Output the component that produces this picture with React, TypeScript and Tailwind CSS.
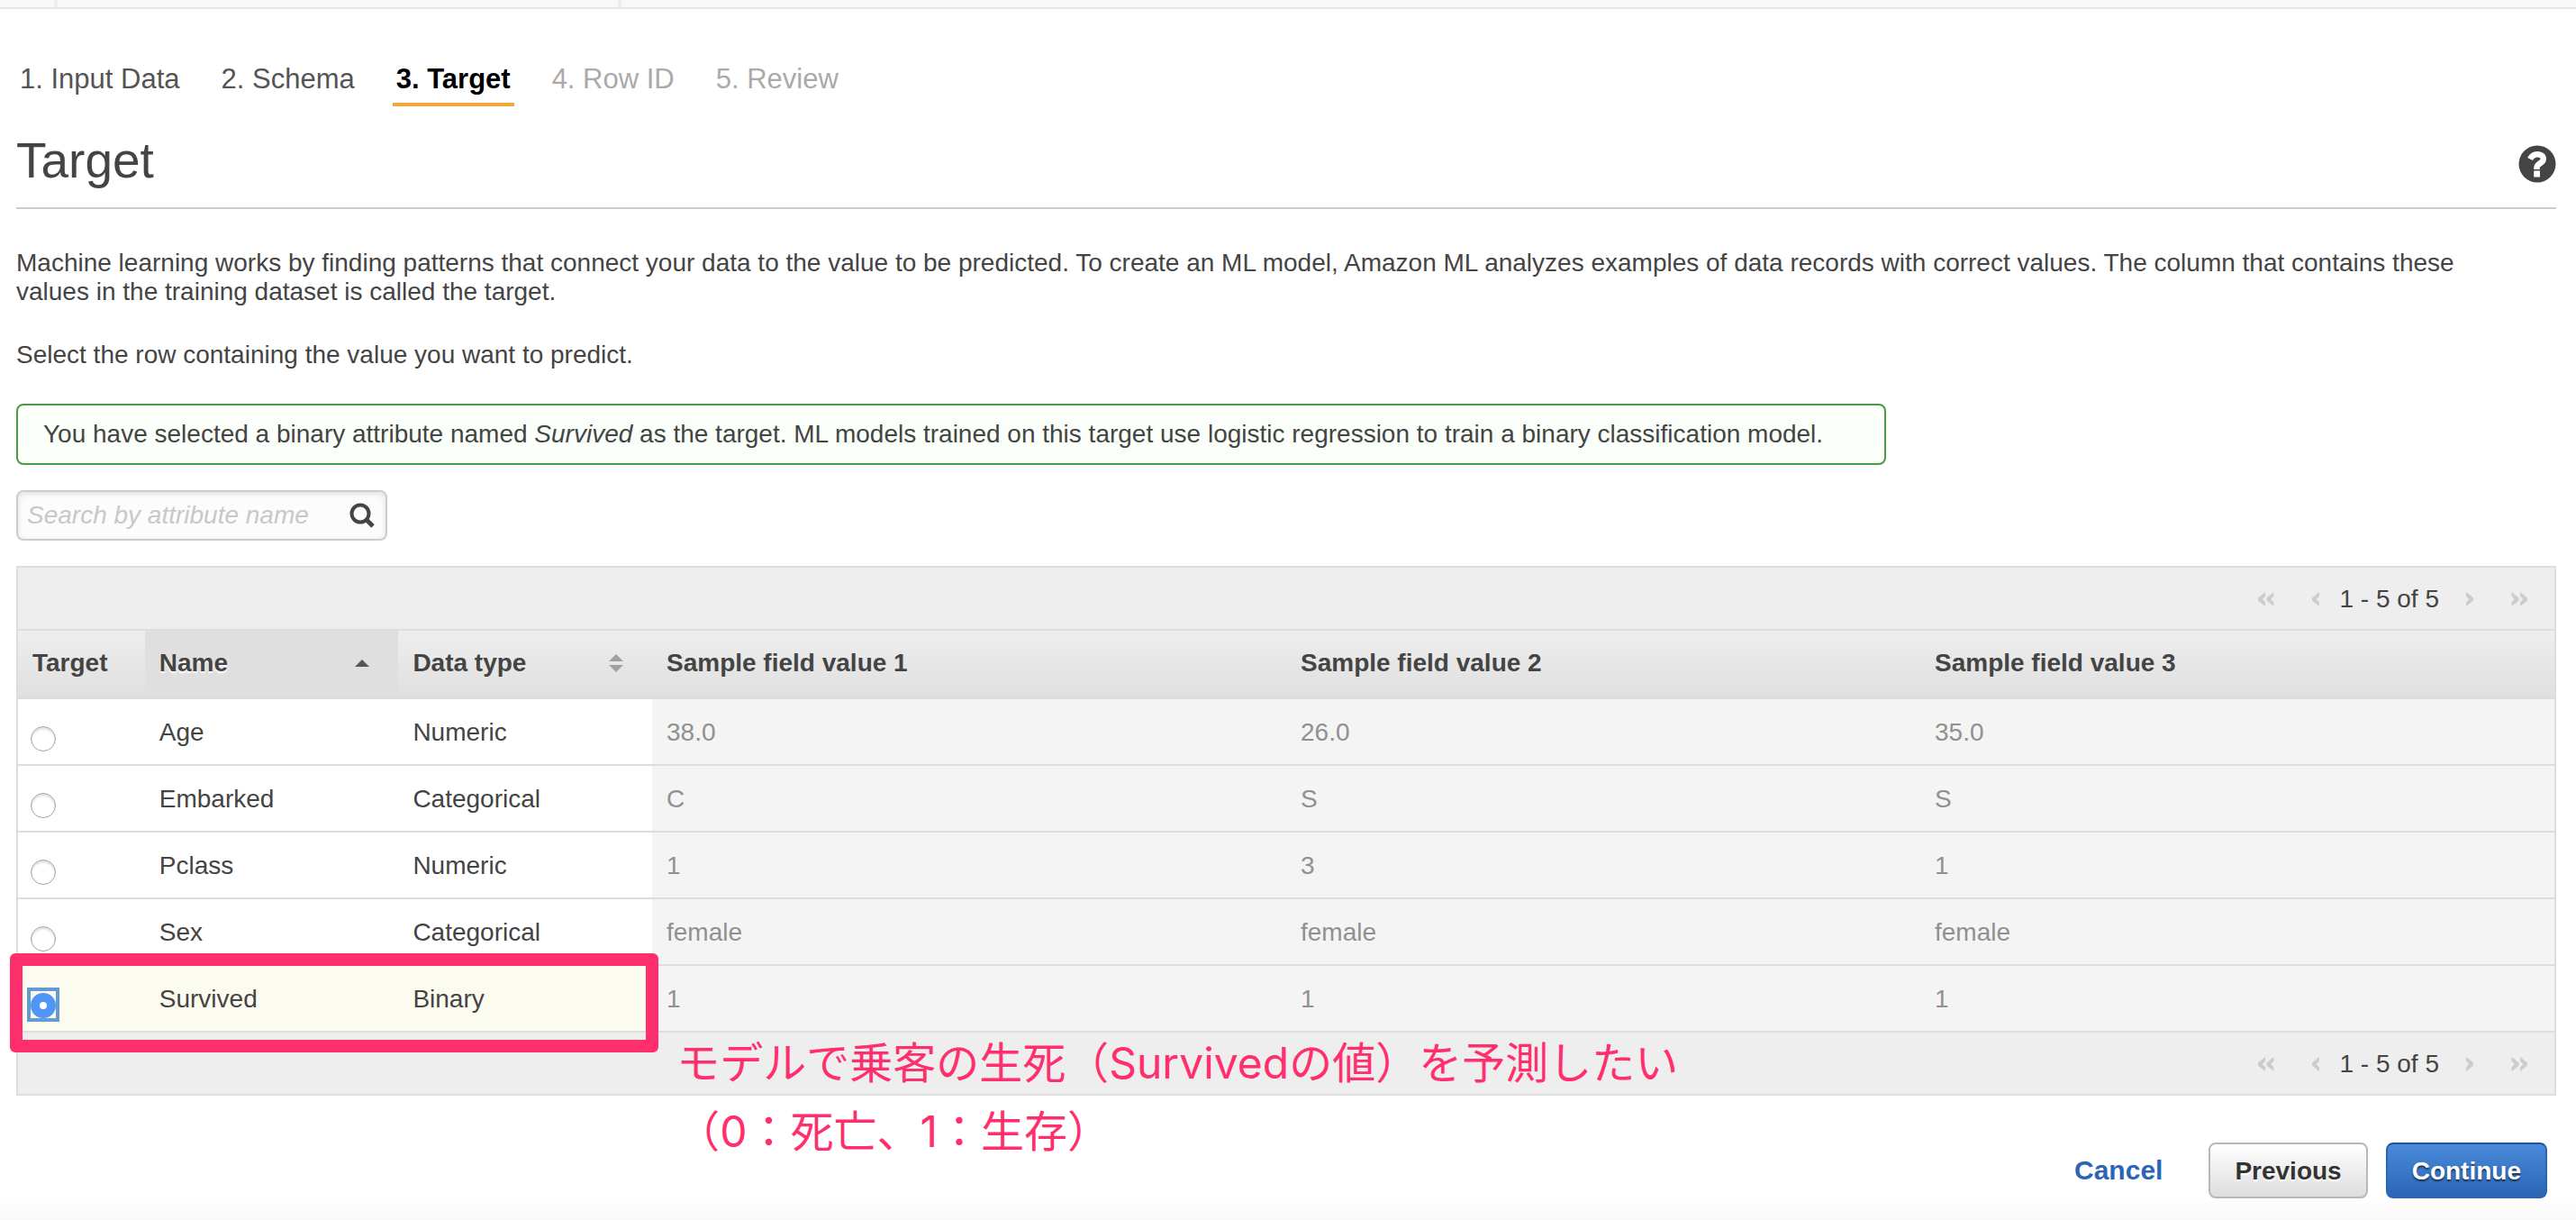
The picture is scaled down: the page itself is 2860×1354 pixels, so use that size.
import { useState } from "react";

type Step = { label: string; state: "done" | "active" | "pending" };

const steps: Step[] = [
  { label: "1. Input Data", state: "done" },
  { label: "2. Schema", state: "done" },
  { label: "3. Target", state: "active" },
  { label: "4. Row ID", state: "pending" },
  { label: "5. Review", state: "pending" },
];

const stepStyles = {
  done: "border-transparent text-[#545454]",
  active: "border-[#f2a63c] font-bold text-black",
  pending: "border-transparent text-[#aaaaaa]",
};

const rows = [
  { name: "Age", type: "Numeric", values: ["38.0", "26.0", "35.0"] },
  { name: "Embarked", type: "Categorical", values: ["C", "S", "S"] },
  { name: "Pclass", type: "Numeric", values: ["1", "3", "1"] },
  { name: "Sex", type: "Categorical", values: ["female", "female", "female"] },
  { name: "Survived", type: "Binary", values: ["1", "1", "1"] },
];

function Chevron({ double, flip }: { double?: boolean; flip?: boolean }) {
  return (
    <svg
      viewBox={double ? "0 0 18 16" : "0 0 8 16"}
      className={double ? "h-4 w-[18px]" : "h-4 w-2"}
      fill="#cccccc"
      aria-hidden="true"
    >
      <g transform={flip ? (double ? "translate(18 0) scale(-1 1)" : "translate(8 0) scale(-1 1)") : undefined}>
        <path d="M8 0v4.500L4.800 8 8 11.500V16L0 9.500v-3z" />
        {double && <path d="M17.500 0v4.500L14.300 8l3.200 3.500V16l-8-6.500v-3z" />}
      </g>
    </svg>
  );
}

function Pager() {
  return (
    <div className="flex items-center justify-end bg-[#eeeeee] pb-[17px] pt-[19px] pr-[30px]">
      <button type="button" aria-label="First page" className="mr-[42px]"><Chevron double /></button>
      <button type="button" aria-label="Previous page" className="mr-[22px]"><Chevron /></button>
      <span>1 - 5 of 5</span>
      <button type="button" aria-label="Next page" className="ml-[30px]"><Chevron flip /></button>
      <button type="button" aria-label="Last page" className="ml-[42px]"><Chevron double flip /></button>
    </div>
  );
}

const headCell = "border-b-4 border-[#dddddd] px-4 py-5 text-left font-bold";

export default function App() {
  const [target, setTarget] = useState("Survived");

  return (
    <div className="min-h-screen bg-white font-['Liberation_Sans',Arial,sans-serif] text-[28px] leading-8 text-[#444444]">
      <div className="flex h-2.5 border-b-2 border-[#e7e7e7] bg-[#f8f8f8] pl-15">
        <div className="w-[630px] border-x-4 border-[#eeeeee]" />
      </div>

      <main className="px-[18px] pt-[60px]">
        <nav aria-label="Steps" className="flex gap-[38px] text-[31px] leading-9">
          {steps.map((s) => (
            <a
              key={s.label}
              href="#"
              aria-current={s.state === "active" ? "step" : undefined}
              className={`border-b-4 px-1 pb-2 ${stepStyles[s.state]}`}
            >
              {s.label}
            </a>
          ))}
        </nav>

        <header className="mr-1 mt-7 flex items-center justify-between border-b-2 border-[#cccccc] pb-5">
          <h1 className="text-[55px] leading-16">Target</h1>
          <button type="button" aria-label="Help" className="mt-2">
            <svg viewBox="0 0 42 42" className="size-[42px]" aria-hidden="true">
              <circle cx="21" cy="21" r="20.500" fill="#444444" />
              <path d="M13 15.500c2-3.600 4.500-5.300 8-5.300 4 0 6.800 2 6.800 5.300 0 4.600-7.300 5-7.300 9.500v2" fill="none" stroke="#ffffff" strokeWidth="6.500" />
              <rect x="17.200" y="28.500" width="6.800" height="7" fill="#ffffff" />
            </svg>
          </button>
        </header>

        <p className="mt-11 pr-14">
          Machine learning works by finding patterns that connect your data to the value to be predicted. To create an ML
          model, Amazon ML analyzes examples of data records with correct values. The column that contains these values in
          the training dataset is called the target.
        </p>
        <p className="mt-[38px]">Select the row containing the value you want to predict.</p>

        <div className="mt-[38px] w-fit rounded-lg border-2 border-[#479a47] bg-[#fafffa] py-4 pl-7 pr-[68px]">
          You have selected a binary attribute named <em>Survived</em> as the target. ML models trained on this target use
          logistic regression to train a binary classification model.
        </div>

        <label className="mt-7 flex w-[412px] items-center rounded-lg border-2 border-[#cccccc] bg-[#fcfcfc] py-2.5 pl-2.5 pr-3 shadow-[inset_0_2px_6px_rgba(0,0,0,0.12)]">
          <input
            type="text"
            aria-label="Search by attribute name"
            placeholder="Search by attribute name"
            className="h-8 min-w-0 flex-1 bg-transparent outline-none placeholder:italic placeholder:text-[#c8c8c8]"
          />
          <svg viewBox="0 0 28 28" className="size-7" fill="none" stroke="#444444" aria-hidden="true">
            <circle cx="12" cy="12" r="9.500" strokeWidth="4" />
            <path d="M18.500 18.500l7.500 7.500" strokeWidth="5" />
          </svg>
        </label>

        <div className="relative mr-1 mt-7">
          <div className="border-2 border-[#dddddd]">
            <Pager />
            <table className="w-full table-fixed border-separate border-spacing-0 border-t-2 border-[#dddddd]">
              <thead className="bg-linear-to-b from-[#eeeeee] to-[#dfdfdf]">
                <tr>
                  <th className={`w-[5%] ${headCell}`}>Target</th>
                  <th className={`w-[10%] bg-[#dfdfdf] ${headCell}`} aria-sort="ascending">
                    <button type="button" className="flex w-full items-center justify-between pr-4 text-shadow-[0_2px_2px_#ffffff]">
                      Name
                      <svg viewBox="0 0 16 8" className="h-2 w-4" fill="#555555" aria-hidden="true"><path d="M0 8L8 0l8 8z" /></svg>
                    </button>
                  </th>
                  <th className={`w-[10%] ${headCell}`}>
                    <button type="button" className="flex w-full items-center justify-between pr-4">
                      Data type
                      <svg viewBox="0 0 16 20" className="h-5 w-4" fill="#a0a0a0" aria-hidden="true"><path d="M0 8L8 0l8 8zM0 12h16l-8 8z" /></svg>
                    </button>
                  </th>
                  <th className={`w-[25%] ${headCell}`}>Sample field value 1</th>
                  <th className={`w-[25%] ${headCell}`}>Sample field value 2</th>
                  <th className={`w-[25%] ${headCell}`}>Sample field value 3</th>
                </tr>
              </thead>
              <tbody>
                {rows.map((r) => {
                  const selected = r.name === target;
                  const tint = selected ? "bg-[#fbfbf0]" : "bg-white";
                  const cell = `border-b-2 border-[#dddddd] px-4 pb-[19px] pt-[21px] ${tint}`;
                  return (
                    <tr key={r.name}>
                      <td className={`border-b-2 border-[#dddddd] pl-3.5 pt-3.5 ${tint}`}>
                        <div className={`w-7 pt-0.5 ${selected ? "outline-4 outline-[#6499d2]" : ""}`}>
                          <input
                            type="radio"
                            name="target"
                            aria-label={r.name}
                            checked={selected}
                            onChange={() => setTarget(r.name)}
                            className="block size-7 appearance-none rounded-full border border-[#a4a4a4] bg-white shadow-[inset_0_2px_3px_rgba(0,0,0,0.15)] outline-none checked:border-10 checked:border-[#5096f7] checked:shadow-none"
                          />
                        </div>
                      </td>
                      <td className={cell}>{r.name}</td>
                      <td className={cell}>{r.type}</td>
                      {r.values.map((v, i) => (
                        <td key={i} className="border-b-2 border-[#dddddd] bg-[#f4f4f4] px-4 pb-[19px] pt-[21px] text-[#909090]">{v}</td>
                      ))}
                    </tr>
                  );
                })}
              </tbody>
            </table>
            <Pager />
          </div>

          <div className="pointer-events-none absolute -left-[7px] bottom-12 h-[110px] w-[calc(25%+15px)] rounded-md border-14 border-[#ff2f6e]" />
          <p className="pointer-events-none absolute left-[26%] top-[514px] whitespace-nowrap font-['Inter','Noto_Sans_CJK_JP',sans-serif] text-[48px] leading-[76px] text-[#ff2f6e]">
            モデルで乗客の生死（Survivedの値）を予測したい
            <br />
            （0：死亡、1：生存）
          </p>
        </div>

        <div className="mt-13 flex items-center justify-end pr-3.5">
          <a href="#" className="mr-[51px] text-[30px] font-bold text-[#2b65b5]">Cancel</a>
          <button type="button" className="mr-5 rounded-lg border-2 border-[#b8b8b8] bg-linear-to-b from-white to-[#dddddd] px-[27px] pb-3 pt-3.5 font-bold text-[#333333] text-shadow-[0_2px_2px_#ffffff]">
            Previous
          </button>
          <button type="button" className="rounded-lg border-2 border-[#2b65b5] border-t-[#1d54a3] bg-linear-to-b from-[#4a8ada] to-[#2b65b5] px-[27px] pb-3 pt-3.5 font-bold text-white text-shadow-[0_2px_2px_rgba(0,0,0,0.6)]">
            Continue
          </button>
        </div>
      </main>
      <div className="h-6 bg-linear-to-b from-white to-[#f9f9f9]" />
    </div>
  );
}
